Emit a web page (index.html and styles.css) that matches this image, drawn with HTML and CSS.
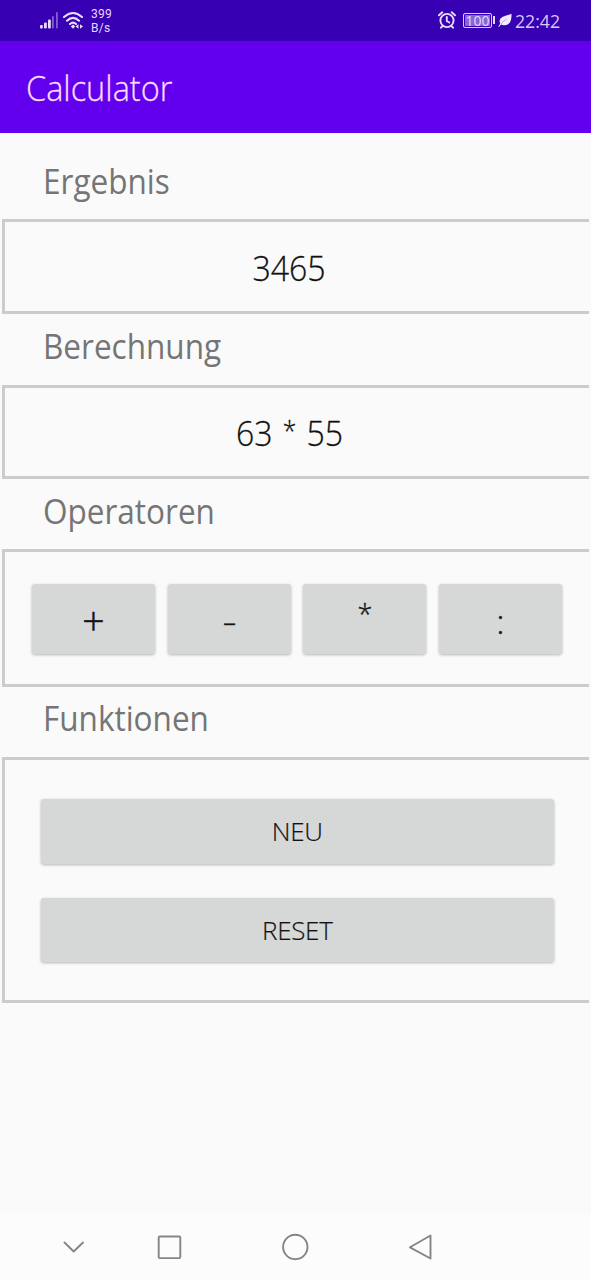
FILE: index.html
```html
<!DOCTYPE html>
<html lang="de">
<head>
<meta charset="utf-8">
<title>Calculator</title>
<link rel="stylesheet" href="styles.css">
</head>
<body>
<div class="screen">
  <div class="status">
    <svg class="signal" width="19" height="18" viewBox="0 0 19 18"><g fill="#eadcff"><rect x="0" y="13" width="2.800" height="3.500" rx="1"/><rect x="4" y="10.500" width="2.800" height="6" rx="1"/><rect x="8" y="7.500" width="2.800" height="9" rx="1"/></g><g fill="#8060d2"><rect x="12" y="4" width="1.800" height="12.500" rx=".8"/><rect x="16" y="0" width="1.800" height="16.500" rx=".8"/></g></svg>
    <svg class="wifi" width="20" height="19" viewBox="0 0 20 19"><g fill="none" stroke="#eadcff" stroke-width="2.100" stroke-linecap="round"><path d="M1 6Q10-2 19 6M4 9.700Q10 4 16 9.700M7 13Q10 10.300 13 13"/></g><path d="M7.800 15.500l2.200-2 2.200 2-2.200 2.200zM12.500 15.500l3-2.200v4.400zM20 15.500L17 13.300v4.400z" fill="#eadcff"/></svg>
    <div class="rate"><span>399</span><span>B/s</span></div>
    <svg class="alarm" width="18" height="18" viewBox="0 0 18 18" fill="none" stroke="#eadcff" stroke-width="1.900" stroke-linecap="round"><circle cx="9" cy="9.500" r="6.600"/><path d="M1 4.300L4.300 1.300M17 4.300L13.700 1.300M8.800 6v4l2.500 1.500M4.200 15.300L3 16.700M13.800 15.300l1.200 1.400"/></svg>
    <div class="battery">100</div><div class="tip"></div>
    <svg class="leaf" width="14" height="15" viewBox="0 0 14 15"><path d="M13.500.8Q14 12.500 6 12.200Q4 12.200 3 11.500L1 14L.3 13.400L2.200 10.800C-.5 4 6.500 3.500 13.500.8Z" fill="#f3eaff"/><path d="M3 11Q6 7.500 8.500 6" fill="none" stroke="#a98ae0" stroke-width=".7"/></svg>
    <div class="clock">22:42</div>
  </div>
  <div class="appbar"><span class="title">Calculator</span></div>
  <main>
    <h2 class="label first"><span>Ergebnis</span></h2>
    <div class="panel value"><span>3465</span></div>
    <h2 class="label tall"><span>Berechnung</span></h2>
    <div class="panel value calc"><span>63 <i class="star">*</i> 55</span></div>
    <h2 class="label"><span>Operatoren</span></h2>
    <div class="panel ops"><button><span class="plus">+</span></button><button><span class="minus">-</span></button><button><span class="times">*</span></button><button><span class="divide">:</span></button></div>
    <h2 class="label last"><span>Funktionen</span></h2>
    <div class="panel funcs"><button>NEU</button><button>RESET</button></div>
  </main>
  <nav class="nav">
    <svg width="591" height="66" viewBox="0 0 591 66" fill="none" stroke="#858585" stroke-width="1.900" stroke-linejoin="round" stroke-linecap="round"><path d="M64.500 28.500L73.700 37.500L83 28.500"/><rect x="158.700" y="22.500" width="21.600" height="21.600" rx="1"/><circle cx="295.300" cy="33" r="12.200"/><path d="M430.500 21.500V44.500L410 33.300Z"/></svg>
  </nav>
</div>
</body>
</html>
```
FILE: styles.css
```css
* { box-sizing: border-box; }
body { margin: 0; font-family: "Open Sans", "Noto Sans", sans-serif; font-weight: 300; background: #fafafa; }
.screen { width: 591px; height: 1280px; display: flex; flex-direction: column; overflow: hidden; }
.status { height: 41px; background: #3700b3; display: flex; align-items: flex-start; color: #e6d8ff; padding-left: 40px; flex: none; }
.signal { margin-top: 12px; }
.wifi { margin: 11px 0 0 4px; }
.rate { display: flex; flex-direction: column; font: 400 12px/14px Roboto, sans-serif; margin: 7px 0 0 8px; width: 25px; letter-spacing: .3px; }
.alarm { margin: 11px 0 0 322px; }
.battery { margin: 13px 0 0 7px; width: 29px; height: 15px; border: 1px solid #d9c8fa; border-radius: 2px; background: #8866d6; box-shadow: inset 0 0 0 1px #3700b3; font: 400 14px/13px "Open Sans", sans-serif; text-align: center; }
.tip { width: 2px; height: 8px; margin: 16px 0 0 1px; background: #e6d8ff; }
.leaf { margin: 13px 0 0 3px; }
.clock { font-size: 19px; line-height: 22px; margin: 10px 0 0 3px; font-weight: 400; color: #d9c8fa; transform: scaleX(.93); transform-origin: left; }
.appbar { height: 92px; background: #6200ee; color: #fbdcff; padding: 23px 0 0 26px; font-size: 34px; line-height: 48px; flex: none; }
main { flex: 1; }
.label { margin: 0; height: 70px; padding: 9px 0 0 42.500px; color: #757575; font-size: 35px; line-height: 46px; font-weight: 400; }
.label.first { height: 86px; padding-top: 25px; }
.label.tall { height: 71px; }
.label.last { padding-top: 8px; }
.label span, .title { display: inline-block; white-space: nowrap; transform: scaleX(.9); transform-origin: left; }
.title { transform: scaleX(.955); -webkit-text-stroke: .3px #fbdcff; }
.panel { margin: 0 2px; border: 3px solid #ccc; border-right: 0; }
.value { height: 95px; font-size: 35px; line-height: 91px; text-align: center; padding-right: 16px; color: #111; }
.value span { display: inline-block; transform: scaleX(.915); -webkit-text-stroke: .3px #111; }
.calc { height: 94px; line-height: 89px; }
.star { display: inline-block; font-style: normal; font-size: 27px; line-height: 0; padding: 0 2px; transform: translateY(-5px); }
.ops { height: 138px; display: flex; gap: 12.700px; padding: 31.500px 27px 0; }
button { font: 300 35px/70px "Open Sans", "Noto Sans", sans-serif; color: #111; background: #d6d8d7; border: 0; border-radius: 3px; padding: 0; box-shadow: 0 1px 3px rgba(0,0,0,.28); -webkit-text-stroke: .2px #222; }
.ops button { flex: 1; height: 70px; }
.ops span { display: block; }
.plus { transform: translateY(1px) scale(1.120); -webkit-text-stroke: .5px #222; }
.minus { transform: translateY(2px) scaleX(1.250); -webkit-text-stroke: .3px #222; }
.times { font-size: 27px; transform: translateY(-5px); -webkit-text-stroke: .4px #222; }
.divide { transform: translateY(3px) scaleY(.93); -webkit-text-stroke: .4px #222; }
.funcs { height: 246px; display: flex; flex-direction: column; gap: 34px; padding: 39px 35.500px 0 36px; }
.funcs button { height: 64.500px; font-size: 26px; line-height: 64px; letter-spacing: -.3px; }
.nav { height: 66px; background: #fcfcfc; flex: none; }
.nav svg { display: block; }
```
